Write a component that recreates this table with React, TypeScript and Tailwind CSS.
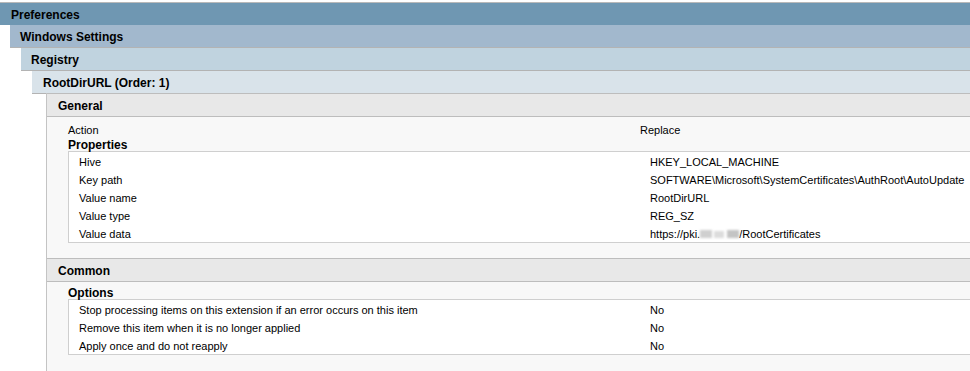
import React from "react";

const properties = [
  { label: "Hive", value: "HKEY_LOCAL_MACHINE" },
  { label: "Key path", value: "SOFTWARE\\Microsoft\\SystemCertificates\\AuthRoot\\AutoUpdate" },
  { label: "Value name", value: "RootDirURL" },
  { label: "Value type", value: "REG_SZ" },
  { label: "Value data", value: "url" },
];

const options = [
  { label: "Stop processing items on this extension if an error occurs on this item", value: "No" },
  { label: "Remove this item when it is no longer applied", value: "No" },
  { label: "Apply once and do not reapply", value: "No" },
];

// blurred-out host name in the value data
const BlurredUrl = () => (
  <span className="flex items-center">
    https://pki.
    <span className="inline-block w-[12px] h-[8px] bg-[#cfcfcf] blur-[1px]" />
    <span className="inline-block w-[10px] h-[7px] bg-[#dcdcdc] blur-[1px] ml-[2px]" />
    <span className="inline-block w-[12px] h-[8px] bg-[#c4c4c4] blur-[1px] ml-[3px]" />
    /RootCertificates
  </span>
);

const Table = ({ rows }: { rows: { label: string; value: string }[] }) => (
  <div className="ml-[21px] -mr-[4px] border border-[#cfcfcf] bg-white">
    {rows.map((r) => (
      <div key={r.label} className="flex h-[18px] pt-[2px] items-center">
        <div className="w-[581px] shrink-0 pl-[10px]">{r.label}</div>
        <div>{r.value === "url" ? <BlurredUrl /> : r.value}</div>
      </div>
    ))}
  </div>
);

const SectionBar = ({ title }: { title: string }) => (
  <div className="h-[24px] pt-[2px] border-y border-[#bdbdbd] bg-[#e8e8e8] pl-[11px] flex items-center font-bold text-[12px]">
    {title}
  </div>
);

export default function App() {
  return (
    <div className="w-[970px] h-[371px] overflow-hidden bg-white pt-[2px] font-['Liberation_Sans',Arial,sans-serif] text-[11px] text-black">
      <div className="border-t border-[#b9b9b9] text-[12px]">
        <div className="h-[22px] pt-[2px] bg-[#6f97b2] pl-[11px] flex items-center font-bold">Preferences</div>
        <div className="ml-[10px]">
          <div className="h-[23px] pt-[2px] bg-[#a2b8cd] border-b border-[#b3b3b3] pl-[10px] flex items-center font-bold">
            Windows Settings
          </div>
          <div className="ml-[11px]">
            <div className="h-[23px] pt-[2px] bg-[#c0d3df] border-b border-[#b3b3b3] pl-[10px] flex items-center font-bold">
              Registry
            </div>
            <div className="ml-[11px]">
              <div className="h-[23px] pt-[2px] bg-[#d9e3ea] border-b border-[#b3b3b3] pl-[11px] flex items-center font-bold">
                RootDirURL (Order: 1)
              </div>
              <div className="ml-[14px] -mt-px border-l border-[#c4c4c4] bg-[#f8f8f8] h-[300px] text-[11px]">
                <SectionBar title="General" />
                <div className="pt-[3px]">
                  <div className="flex h-[18px] pt-[2px] items-center pl-[21px]">
                    <div className="w-[572px] shrink-0">Action</div>
                    <div>Replace</div>
                  </div>
                  <div className="h-[13px] leading-[13px] pt-px pl-[21px] font-bold text-[12px]">Properties</div>
                  <Table rows={properties} />
                </div>
                <div className="mt-[15px]">
                  <SectionBar title="Common" />
                  <div className="pt-[4px]">
                    <div className="h-[13px] leading-[13px] pt-px pl-[21px] font-bold text-[12px]">Options</div>
                    <Table rows={options} />
                  </div>
                </div>
              </div>
            </div>
          </div>
        </div>
      </div>
    </div>
  );
}
